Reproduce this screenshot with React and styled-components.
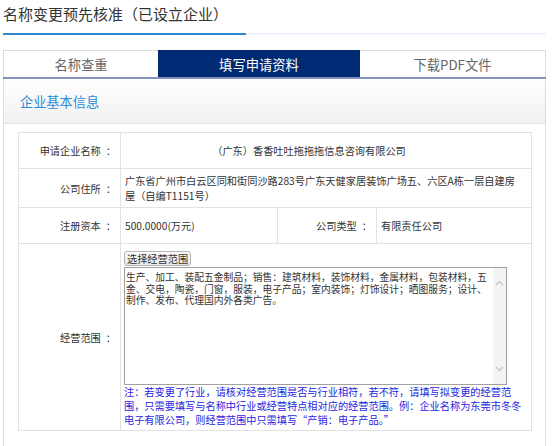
import React from "react";
import styled, { createGlobalStyle } from "styled-components";

const Global = createGlobalStyle`
  html, body { margin: 0; padding: 0; background: #fff; overflow: hidden; }
  body { font-family: "Microsoft YaHei", "Noto Sans CJK SC", "Noto Sans", sans-serif; color: #333; }
  * { box-sizing: border-box; }
`;

const Page = styled.div`
  width: 543px;
  margin-left: 3px;
  height: 446px;
  display: flex;
  flex-direction: column;
`;

const TitleBar = styled.div`
  border-bottom: 2px solid #edf3fa;
`;

const Title = styled.h1`
  margin: 0 0 -2px 0;
  width: 243px;
  padding: 4px 0 9px 0;
  font-size: 15px;
  line-height: 20px;
  font-weight: normal;
  color: #333;
  border-bottom: 2px solid #2f86d3;
`;

const TabBar = styled.div`
  display: flex;
  margin-top: 15px;
  border-bottom: 2px solid #8193bd;
`;

const Tab = styled.div`
  width: ${(p) => p.$w}px;
  height: 27px;
  display: flex;
  align-items: center;
  justify-content: center;
  font-size: 13.3px;
  border-top: 1px solid ${(p) => (p.$active ? "#002b74" : "#dcdcdc")};
  border-left: ${(p) => (p.$first ? "1px solid #dcdcdc" : "none")};
  border-right: ${(p) => (p.$last ? "1px solid #dcdcdc" : "none")};
  background: ${(p) => (p.$active ? "#002b74" : "#fff")};
  color: ${(p) => (p.$active ? "#fff" : "#666")};
`;

const Panel = styled.div`
  flex: 1;
  border-left: 1px solid #dcdcdc;
  border-right: 1px solid #dcdcdc;
`;

const PanelHeader = styled.div`
  height: 45px;
  display: flex;
  align-items: center;
  padding-left: 16px;
  background: linear-gradient(#ffffff, #f1f1f1);
  border-bottom: 1px solid #e3e3e3;
  color: #2e8ad6;
  font-size: 13.2px;
`;

const PanelBody = styled.div`
  padding: 8px 14px 0 14px;
`;

const Table = styled.table`
  width: 513px;
  border-collapse: collapse;
  table-layout: fixed;
  font-size: 10.2px;
`;

const Row = styled.tr`
  height: ${(p) => p.$h}px;
`;

const Label = styled.td`
  border: 1px solid #e2e2e2;
  text-align: right;
  padding: 0 4px 0 0;
  vertical-align: middle;
  white-space: nowrap;
  color: #333;
`;

const Colon = styled.span`
  margin-left: 5px;
`;

const Value = styled.td`
  border: 1px solid #e2e2e2;
  padding: ${(p) => p.$pad || "0 4px 0 4px"};
  text-align: ${(p) => (p.$center ? "center" : "left")};
  vertical-align: ${(p) => p.$valign || "middle"};
  line-height: 15px;
  color: #333;
`;

const PickButton = styled.button`
  display: block;
  height: 15px;
  padding: 0 2px;
  margin: 0 0 1px 0;
  font: inherit;
  font-size: 10.2px;
  line-height: 13px;
  color: #333;
  background: linear-gradient(#fbfbfb, #e8e8e8);
  border: 1px solid #b5b5b5;
  border-radius: 3px;
`;

const ScopeBox = styled.div`
  width: 383px;
  height: 118px;
  display: flex;
  border: 1px solid #a0a0a0;
  background: #fff;
`;

const ScopeText = styled.textarea`
  flex: 1;
  border: none;
  outline: none;
  resize: none;
  overflow: hidden;
  padding: 4px 2px 0 1px;
  margin: 0;
  font-family: inherit;
  font-size: 9.75px;
  line-height: 11.7px;
  color: #333;
  background: transparent;
`;

const ScrollTrack = styled.div`
  width: 13px;
  background: #f3f3f3;
  display: flex;
  flex-direction: column;
  justify-content: space-between;
  align-items: center;
  padding: 12px 0 12px 0;
`;

const Note = styled.div`
  color: #2626df;
  line-height: 14px;
`;

const Chevron = ({ up }) => (
  <svg width="9" height="6" viewBox="0 0 9 6">
    <polyline
      points={up ? "1,5 4.5,1.5 8,5" : "1,1 4.5,4.5 8,1"}
      fill="none"
      stroke="#c4c4c4"
      strokeWidth="1.2"
    />
  </svg>
);

const scope =
  "生产、加工、装配五金制品；销售：建筑材料，装饰材料，金属材料，包装材料，五金、交电，陶瓷，门窗，服装，电子产品；室内装饰；灯饰设计；晒图服务；设计、制作、发布、代理国内外各类广告。";

export default function App() {
  return (
    <>
      <Global />
      <Page>
        <TitleBar>
          <Title>名称变更预先核准（已设立企业）</Title>
        </TitleBar>
        <TabBar>
          <Tab $w={155} $first>名称查重</Tab>
          <Tab $w={202} $active>填写申请资料</Tab>
          <Tab $w={186} $last>下载PDF文件</Tab>
        </TabBar>
        <Panel>
          <PanelHeader>企业基本信息</PanelHeader>
          <PanelBody>
            <Table>
              <colgroup>
                <col style={{ width: 102 }} />
                <col style={{ width: 157 }} />
                <col style={{ width: 99 }} />
                <col style={{ width: 155 }} />
              </colgroup>
              <tbody>
                <Row $h={36}>
                  <Label>申请企业名称<Colon>：</Colon></Label>
                  <Value colSpan={3} $center $pad="0 38px 0 4px">
                    （广东）香香吐吐拖拖拖信息咨询有限公司
                  </Value>
                </Row>
                <Row $h={39}>
                  <Label>公司住所<Colon>：</Colon></Label>
                  <Value colSpan={3} $pad="0 14px 0 4px">
                    广东省广州市白云区同和街同沙路283号广东天健家居装饰广场五、六区A栋一层自建房屋（自编T1151号）
                  </Value>
                </Row>
                <Row $h={36}>
                  <Label>注册资本<Colon>：</Colon></Label>
                  <Value>500.0000(万元)</Value>
                  <Label>公司类型<Colon>：</Colon></Label>
                  <Value>有限责任公司</Value>
                </Row>
                <Row $h={187}>
                  <Label>经营范围<Colon>：</Colon></Label>
                  <Value colSpan={3} $valign="top" $pad="7px 3px 2px 3px">
                    <PickButton type="button">选择经营范围</PickButton>
                    <ScopeBox>
                      <ScopeText readOnly defaultValue={scope} />
                      <ScrollTrack>
                        <Chevron up />
                        <Chevron />
                      </ScrollTrack>
                    </ScopeBox>
                    <Note>
                      注：若变更了行业，请核对经营范围是否与行业相符，若不符，请填写拟变更的经营范围，只需要填写与名称中行业或经营特点相对应的经营范围。例：企业名称为东莞市冬冬电子有限公司，则经营范围中只需填写“产销：电子产品。”
                    </Note>
                  </Value>
                </Row>
              </tbody>
            </Table>
          </PanelBody>
        </Panel>
      </Page>
    </>
  );
}
